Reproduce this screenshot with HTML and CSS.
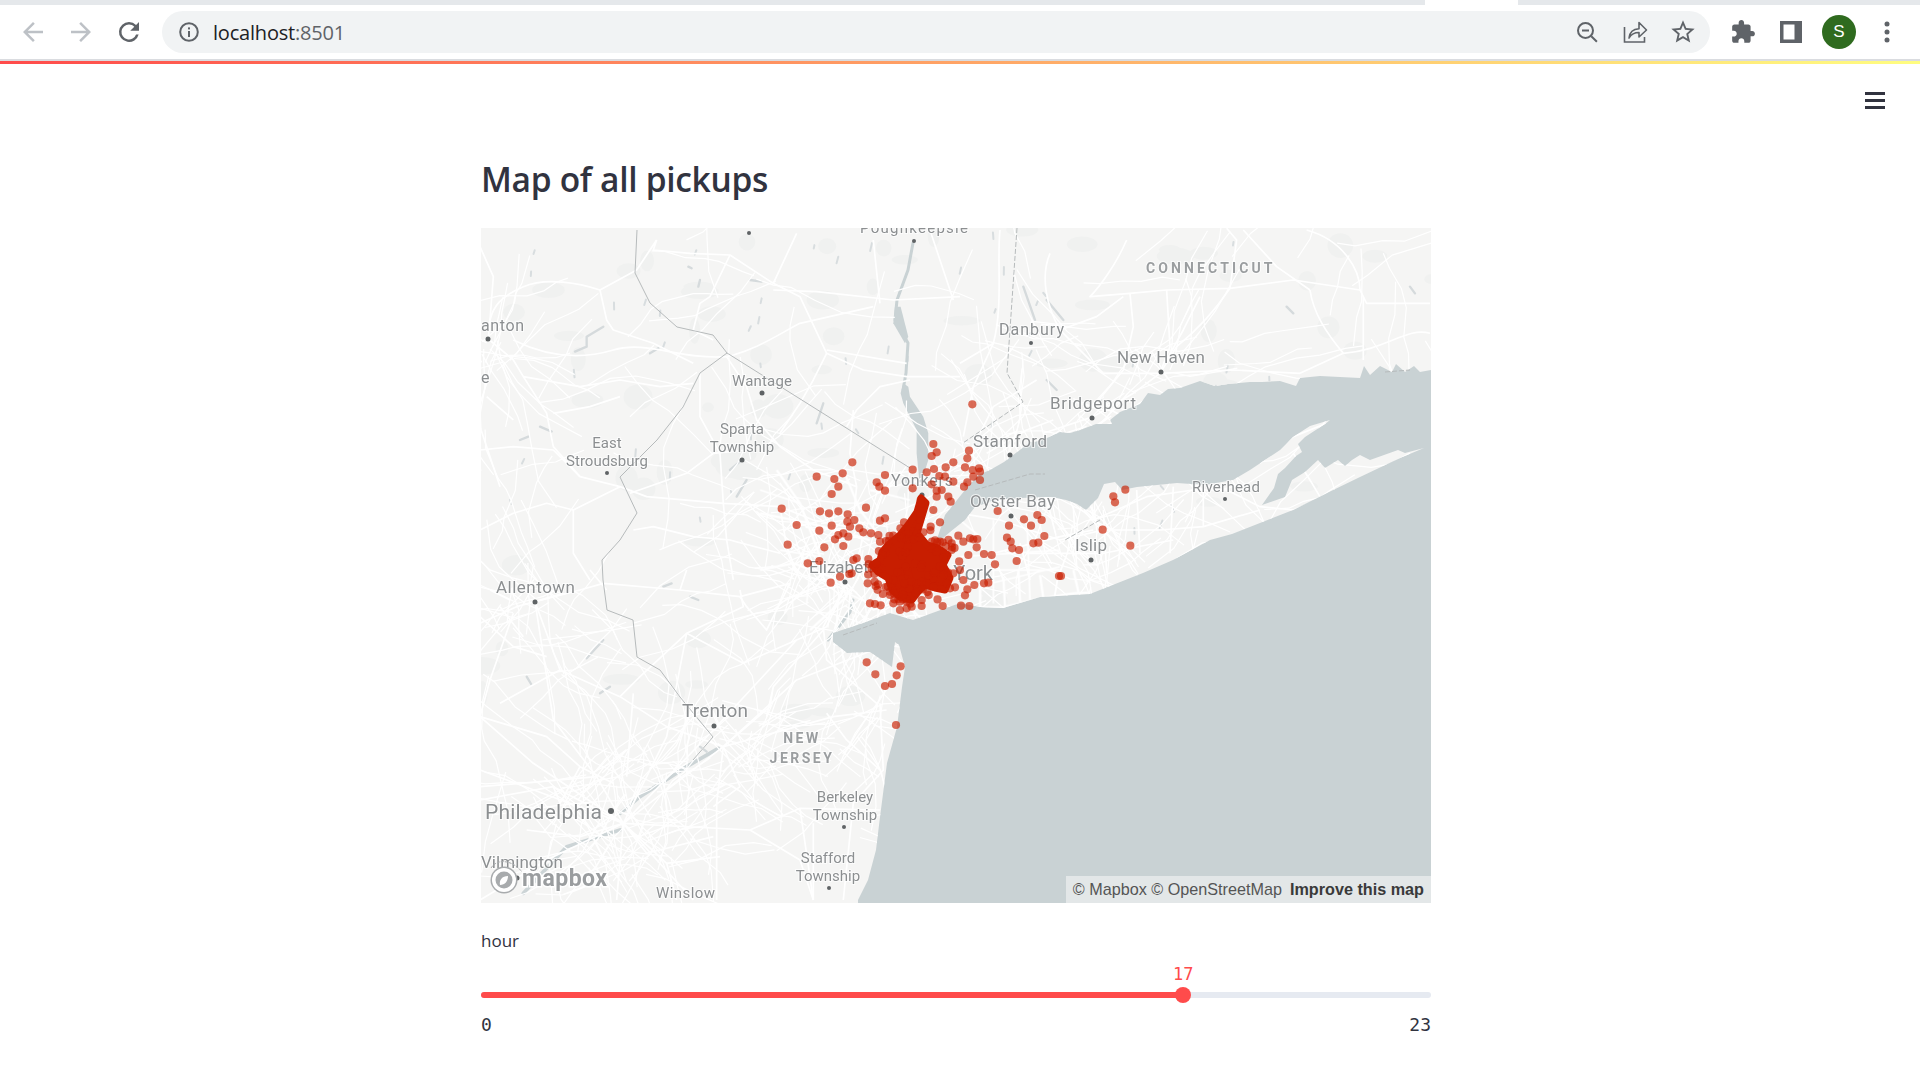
FILE: index.html
```html
<!DOCTYPE html>
<html lang="en">
<head>
    <meta charset="UTF-8">
    <title>Map of all pickups</title>
    <link rel="stylesheet" href="styles.css">
</head>
<body>

    <div class="tabstrip"><div class="tab"></div></div>

    <div class="toolbar">
        <button class="tool"><svg width="30" height="30" viewBox="0 0 24 24" class="off"><path d="M20 11H7.830l5.590-5.590L12 4l-8 8 8 8 1.410-1.410L7.830 13H20v-2z"/></svg></button>
        <button class="tool"><svg width="30" height="30" viewBox="0 0 24 24" class="off"><path d="M4 11h12.170l-5.590-5.590L12 4l8 8-8 8-1.410-1.410L16.170 13H4v-2z"/></svg></button>
        <button class="tool"><svg width="30" height="30" viewBox="0 0 24 24"><path d="M17.650 6.350A7.960 7.960 0 0 0 12 4a8 8 0 1 0 7.730 10h-2.080A6 6 0 1 1 12 6c1.660 0 3.140.69 4.220 1.780L13 11h7V4l-2.350 2.350z"/></svg></button>

        <div class="omnibox">
            <svg width="24" height="24" viewBox="0 0 24 24" class="info"><circle cx="12" cy="12" r="8.800" fill="none" stroke="#5f6368" stroke-width="2"/><rect x="11" y="11" width="2" height="6"/><rect x="11" y="7.400" width="2" height="2"/></svg>
            <span class="url">localhost<span class="port">:8501</span></span>
            <div class="omni-icons">
                <button class="tool"><svg width="24" height="24" viewBox="0 0 24 24"><circle cx="10.500" cy="10.500" r="7.500" fill="none" stroke="#5f6368" stroke-width="2"/><path d="M7 9.600h7v1.800H7zM15.600 16.900l1.400-1.400 5.600 5.600-1.400 1.400z"/></svg></button>
                <button class="tool"><svg width="26" height="26" viewBox="0 0 26 26"><path d="M2.500 8v15h20v-5" fill="none" stroke="#5f6368" stroke-width="1.600"/><path d="M7 19c.6-5.500 4-9 10-9.300V3.500l7.500 7.500-7.500 7v-4.500c-4 0-7.500 1.300-10 5.500z" fill="none" stroke="#5f6368" stroke-width="1.600" stroke-linejoin="round"/></svg></button>
                <button class="tool"><svg width="28" height="28" viewBox="0 0 24 24"><path d="M22 9.240l-7.190-.62L12 2 9.190 8.630 2 9.240l5.460 4.730L5.820 21 12 17.270 18.180 21l-1.630-7.030L22 9.240zM12 15.400l-3.760 2.270 1-4.280-3.320-2.880 4.380-.38L12 6.100l1.710 4.040 4.380.38-3.320 2.880 1 4.280L12 15.400z"/></svg></button>
            </div>
        </div>

        <button class="tool"><svg width="26" height="26" viewBox="0 0 24 24"><path d="M20.500 11H19V7c0-1.100-.9-2-2-2h-4V3.500C13 2.120 11.880 1 10.500 1S8 2.120 8 3.500V5H4c-1.100 0-1.990.9-1.990 2v3.800H3.500c1.490 0 2.700 1.210 2.700 2.700s-1.210 2.700-2.700 2.700H2V20c0 1.100.9 2 2 2h3.800v-1.500c0-1.490 1.210-2.700 2.700-2.700 1.490 0 2.700 1.210 2.700 2.700V22H17c1.100 0 2-.9 2-2v-4h1.500c1.380 0 2.500-1.120 2.500-2.500S21.880 11 20.500 11z"/></svg></button>
        <button class="tool"><svg width="22" height="22" viewBox="0 0 22 22"><path d="M0 0h22v22H0z"/><path d="M3.500 3.500h11v15h-11z" fill="#fff"/></svg></button>
        <button class="tool"><span class="avatar">S</span></button>
        <button class="tool"><svg width="8" height="24" viewBox="0 0 8 24"><circle cx="4" cy="4" r="2.500"/><circle cx="4" cy="12" r="2.500"/><circle cx="4" cy="20" r="2.500"/></svg></button>
    </div>

    <div class="decoration"></div>

    <div class="app">
        <button class="menu" aria-label="menu"><span></span><span></span><span></span></button>

        <div class="block">
            <h2 class="title">Map of all pickups</h2>

            <div class="map">
                <svg id="mapSvg" class="map-svg" width="950" height="675" viewBox="481 228 950 675">
                    <defs>
                        <clipPath id="landClip"><use href="#landShape"/></clipPath>
                    </defs>

                    <rect class="water" x="481" y="228" width="950" height="675"/>

                    <path id="landShape" class="land" d="M481 228H1431V370L1420 372 1414 366 1405 372 1396 364 1392 372 1380 366 1370 375 1364 366 1360 378 1340 377 1320 376 1300 378 1296 386 1280 381 1262 382 1250 382 1228 384 1215 386 1200 381 1180 388 1168 389 1160 395 1148 393 1140 404 1120 412 1110 420 1112 424 1096 424 1080 430 1070 433 1060 432 1040 441 1030 442 1012 456 1004 462 990 470 978 475 965 490 945 515 935 545 950 532 965 520 975 507 995 500 1020 498 1050 497 1066 500 1077 504 1086 510 1098 498 1104 484 1115 482 1122 490 1137 487 1177 483 1205 485 1233 480 1250 470 1262 462 1280 450 1293 437 1310 426 1330 420 1325 424 1305 437 1298 444 1302 452 1296 456 1285 468 1278 474 1274 488 1262 505 1285 497 1292 480 1305 472 1318 460 1325 468 1338 460 1345 466 1352 460 1360 455 1370 460 1398 450 1405 453 1424 448 1400 458 1360 477 1327 493 1293 510 1260 523 1232 534 1210 540 1173 560 1143 573 1100 590 1090 594 1040 597 1003 608 980 607 960 603 913 620 890 613 863 623 833 633 833 642 847 653 870 652 892 667 895 642 899 645 905 667 902 687 897 727 887 763 880 817 876 850 868 880 858 900V903H481z"/>

                    <g id="texture" clip-path="url(#landClip)"></g>

                    <g class="lakes">
                        <path class="hudson-thin" d="M913 243L908 270 897 300 895 320 908 343 906 373 903 390"/>
                        <g transform="translate(480 220) scale(.3333)">
                            <path class="hudson-fill" d="M1245 260L1262 260 1285 350 1275 370 1240 310z"/>
                            <path class="hudson-fill" d="M1270 490L1285 500 1290 530 1330 590 1345 640V720L1320 800 1310 700V630L1270 550 1262 520z"/>
                            <path d="M370 320L320 350 320 380 285 395"/>
                            <path d="M1010 610L1030 550"/>
                            <path d="M770 830L800 780M750 750L780 725M510 400L535 385M180 620L215 635M120 660L145 650M625 140L635 145M655 200L660 180M810 180L845 185"/>
                        </g>
                        <g transform="translate(960 220) scale(.3333)">
                            <path d="M190 200L225 300M260 240L310 300M260 480L290 510M980 260L1000 280M1350 200L1365 220"/>
                        </g>
                        <g transform="translate(480 570) scale(.3333)">
                            <path class="river" d="M130 970L260 830 420 780M420 730L480 680 620 590 715 535"/>
                            <path d="M630 80L655 90M660 530L680 545M360 370L390 350M320 265L370 210M550 50L575 40M140 320L155 345"/>
                        </g>
                        <path class="hudson-thin" d="M828 640L840 625 850 612 853 600"/>
                    </g>

                    <g id="minorRoads" clip-path="url(#landClip)"></g>

                    <g class="roads" clip-path="url(#landClip)">
                        <g transform="translate(480 220) scale(.3333)">
                            <path d="M0 80L40 170 30 300 25 357 100 420 130 470 200 580 220 680 300 770"/>
                            <path d="M100 360C200 410 300 420 400 390S600 420 740 410"/>
                            <path d="M360 210C300 190 200 170 130 200S40 260 30 300"/>
                            <path d="M360 210L380 300 400 330 520 370 640 430"/>
                            <path d="M530 60L520 90 630 100 750 105 880 190 960 230 1040 400 1150 450 1280 470 1440 470"/>
                            <path d="M750 105L690 230 660 250 640 330 700 360"/>
                            <path d="M880 210L1010 215 1240 240 1440 230"/>
                            <path d="M740 410C830 390 900 340 960 310L1180 260"/>
                            <path d="M1040 400L1000 480 960 550 900 640"/>
                            <path d="M660 460V590L720 700 730 850"/>
                            <path d="M740 410L800 500 830 600 900 680 1000 750 1130 800"/>
                            <path d="M0 690L100 680 220 690 300 770 420 800 500 830 730 850 900 860 1000 900 1200 940"/>
                            <path d="M450 820L620 760 700 700 800 690"/>
                            <path d="M420 800L280 870V1000L330 1080"/>
                            <path d="M0 930L100 880 200 850 280 870"/>
                            <path d="M730 850L740 960 760 1080"/>
                            <path d="M900 860L920 980 960 1080"/>
                            <path d="M460 930L520 920 640 950 750 960 900 1000"/>
                            <path d="M220 580L330 560 420 530"/>
                            <path d="M130 470L300 500 420 480 540 500 640 490"/>
                            <path d="M1120 570L1110 700 1130 800 1120 900"/>
                            <path d="M1290 480L1200 500 1130 570 1100 620"/>
                            <path d="M1040 390L1280 430M1180 60L1200 250M1350 30L1420 240M950 40L880 190M360 210L470 150 530 60M20 530L100 600M0 620L60 800"/>
                        </g>
                        <g transform="translate(960 220) scale(.3333)">
                            <path d="M120 30C110 120 130 260 100 370L40 500 10 650"/>
                            <path d="M270 100C240 170 260 260 300 330L430 460H600L820 450 1020 460"/>
                            <path d="M500 60C470 130 420 200 390 230L510 220 620 210 810 205 1000 180 1200 210 1220 250H1410"/>
                            <path d="M810 205C760 280 700 340 650 380L600 460"/>
                            <path d="M510 220L520 320 490 450 400 560"/>
                            <path d="M620 210L630 380 600 460"/>
                            <path d="M720 230L670 330 620 420"/>
                            <path d="M810 205L830 60 800 25"/>
                            <path d="M1050 210C1060 280 1100 340 1150 400"/>
                            <path d="M1210 230V420"/>
                            <path d="M1040 30C1150 60 1200 150 1200 210"/>
                            <path d="M1410 340C1340 320 1280 390 1150 400L1020 460"/>
                            <path d="M850 30L950 140 1050 210"/>
                            <path d="M300 330L410 290 490 230"/>
                            <path d="M100 370L0 430M230 480L100 560 60 640M250 640L400 590 520 520 600 460M80 700L200 630 280 600"/>
                            <path d="M400 900L560 830 700 810H800L900 860 1000 870 1150 810 1350 700"/>
                            <path d="M300 960L430 930H600L730 920 900 870"/>
                            <path d="M60 1010L300 950 400 930M900 730L1000 650 1100 610M1000 700L1050 780 1080 830"/>
                            <path d="M200 1000H430L640 960M340 860L350 1040M430 870L440 1060M530 810L540 1000M640 800L630 1000M730 810V920"/>
                            <path d="M0 880L120 900 300 960M100 1000L130 1080M180 970L210 1080"/>
                        </g>
                        <g transform="translate(960 570) scale(.3333)">
                            <path class="main" d="M0 112L130 112 240 85 340 70 385 68M130 20L135 110M175 0L180 95M340 0L355 65M60 40L60 110M240 15L250 85"/>
                        </g>
                        <g transform="translate(480 570) scale(.3333)">
                            <path d="M0 160L110 110 165 95 300 60 370 40 600 60 780 80 930 40"/>
                            <path d="M430 760L700 480 950 210 1040 170 1100 40"/>
                            <path d="M430 760L730 530"/>
                            <path d="M430 760L640 990M430 760L560 880 590 990M430 760L410 990M430 760L200 870 0 990"/>
                            <path d="M430 760L810 780 960 715 1200 720"/>
                            <path d="M430 760L160 580 0 440M430 760L350 620 220 450 165 95M430 760L0 600"/>
                            <path d="M430 760L560 500 620 190 790 110 780 60"/>
                            <path d="M730 530L710 700V990M730 530L780 650 700 710M730 530L950 330 1180 240M730 530L1060 440 1220 420"/>
                            <path d="M880 350L860 440M1030 180L880 350 870 410 730 530"/>
                            <path d="M1200 400L1210 600 1120 700 1090 990M960 715L1000 990M810 780L960 870 1000 990"/>
                            <path d="M1040 430L1100 510 1200 600M1000 990V760M0 690L220 650 430 760M100 130L30 330 0 440"/>
                            <path d="M165 95L240 300 420 380 560 470 730 530M0 440L200 500 300 590 400 640M460 370L440 620M350 620L120 640 0 650M620 190L480 320 420 380"/>
                            <path d="M1100 40L1030 170 1040 270 1190 400M0 140L100 230 200 260M240 300L60 400M620 190L790 280 950 210M300 590L240 700 220 650M430 760L300 800 140 780M560 880L720 860M430 760L500 850 700 800"/>
                            <path d="M60 110L130 200M90 90L30 60M165 95L250 70M330 0L380 60M600 60L620 0M780 80L800 110 860 180 930 40M1100 40L1180 120 1240 100"/>
                        </g>
                        <g transform="translate(760 470) scale(.3333)">
                            <path class="main" d="M0 300L100 280 240 330 260 380 150 480M0 130L150 160 330 210M50 0L120 100 180 260M250 0L300 120 360 200"/>
                            <path d="M330 60L450 90M540 300L900 300M650 350L900 290M700 150V400M800 130L810 390M900 240L600 260M120 100L0 60M150 300L140 400M180 260L60 240M330 400L240 360M600 150L660 200"/>
                        </g>
                    </g>

                    <g class="borders">
                        <path d="M727 353L910 468"/>
                        <path class="dash" d="M1017 228L1007 373 1023 402 963 443"/>
                        <path class="dash" d="M975 490L1030 474 1045 474M1100 520L1065 540M843 635L877 623M1385 372L1410 370"/>
                        <path d="M637 230L635 273 650 303 677 327 713 335 727 353 700 373 683 407 657 440 620 477 637 513 620 540 602 560 603 580 607 610 633 620 637 657 660 670 680 697 713 737 693 760"/>
                    </g>

                    <g class="labels">
                        <text x="860" y="233" textLength="108">Poughkeepsie</text>
                        <text x="481" y="331" textLength="43" class="l16">anton</text>
                        <text x="481" y="383" class="l16">e</text>
                        <text x="732" y="386" textLength="60">Wantage</text>
                        <text x="742" y="434" text-anchor="middle">Sparta</text>
                        <text x="742" y="452" text-anchor="middle">Township</text>
                        <text x="607" y="448" text-anchor="middle">East</text>
                        <text x="607" y="466" text-anchor="middle">Stroudsburg</text>
                        <text x="891" y="486" textLength="62" class="l16">Yonkers</text>
                        <text x="809" y="573" class="l17">Elizabeth</text>
                        <text x="993" y="580" text-anchor="end" class="l20">New York</text>
                        <text x="970" y="507" textLength="85" class="l17">Oyster Bay</text>
                        <text x="999" y="335" textLength="65" class="l16">Danbury</text>
                        <text x="1117" y="363" textLength="88" class="l17">New Haven</text>
                        <text x="1050" y="409" textLength="86" class="l17">Bridgeport</text>
                        <text x="973" y="447" textLength="74" class="l17">Stamford</text>
                        <text x="1192" y="492" textLength="68">Riverhead</text>
                        <text x="1075" y="551" textLength="32" class="l17">Islip</text>
                        <text x="496" y="593" textLength="79" class="l17">Allentown</text>
                        <text x="682" y="717" textLength="66" class="l19">Trenton</text>
                        <text x="485" y="819" textLength="117" class="l21">Philadelphia</text>
                        <text x="481" y="868" textLength="82" class="l17">Vilmington</text>
                        <text x="656" y="898" textLength="59">Winslow</text>
                        <text x="845" y="802" text-anchor="middle">Berkeley</text>
                        <text x="845" y="820" text-anchor="middle">Township</text>
                        <text x="828" y="863" text-anchor="middle">Stafford</text>
                        <text x="828" y="881" text-anchor="middle">Township</text>
                        <text x="1146" y="273" textLength="129" class="state">CONNECTICUT</text>
                        <text x="802" y="743" text-anchor="middle" class="state">NEW</text>
                        <text x="802" y="763" text-anchor="middle" class="state">JERSEY</text>
                    </g>

                    <g class="towns">
                        <circle cx="488" cy="339" r="2.500"/><circle cx="762" cy="393" r="2.500"/><circle cx="742" cy="460" r="2.500"/>
                        <circle cx="607" cy="473" r="2"/><circle cx="914" cy="241" r="2"/><circle cx="749" cy="233" r="2"/>
                        <circle cx="922" cy="495" r="2.500"/><circle cx="1031" cy="343" r="2"/><circle cx="1161" cy="372" r="2.500"/>
                        <circle cx="1092" cy="418" r="2.500"/><circle cx="1010" cy="455" r="2.500"/><circle cx="1011" cy="516" r="2.500"/>
                        <circle cx="1225" cy="499" r="2"/><circle cx="1091" cy="560" r="2.500"/><circle cx="535" cy="602" r="2.500"/>
                        <circle cx="845" cy="582" r="2.500"/><circle cx="714" cy="726" r="2.500"/><circle cx="611" cy="811" r="3"/>
                        <circle cx="844" cy="827" r="2"/><circle cx="829" cy="888" r="2"/><circle cx="517" cy="878" r="2.500"/>
                    </g>

                    <g id="pickups"></g>

                    <g class="logo">
                        <path class="logo-ring" d="M491 868C497 858 513 860 522 872"/>
                        <circle class="logo-edge" cx="504" cy="880" r="13.500"/>
                        <circle class="logo-white" cx="504" cy="880" r="12"/>
                        <circle class="logo-edge" cx="504" cy="880" r="8.500"/>
                        <path d="M500 885c-1-5 2-9 8-9 0 5-3 9-8 9z"/>
                        <text x="522" y="886" textLength="85">mapbox</text>
                    </g>
                </svg>

                <div class="attrib">© Mapbox © OpenStreetMap<b>Improve this map</b></div>
            </div>

            <label class="hour-label">hour</label>

            <div class="slider">
                <div class="slider-fill" style="width: 73.91%">
                    <span class="slider-thumb"></span>
                    <span class="slider-value">17</span>
                </div>
            </div>

            <div class="slider-ends">
                <span>0</span>
                <span>23</span>
            </div>
        </div>
    </div>

    <script src="map.js"></script>
</body>
</html>
```

FILE: styles.css
```css
html, body {
    margin: 0;
    height: 100%;
    overflow: hidden;
    background-color: #fff;
}

body {
    display: flex;
    flex-direction: column;
    font-family: 'Open Sans', sans-serif;
    color: #31333f;
}

button {
    border: none;
    padding: 0;
    background: none;
}

.tabstrip {
    height: 5px;
    background-color: #e5e8eb;
}

.tab {
    width: 93px;
    height: 5px;
    margin-left: 1425px;
    background-color: #fff;
}

.toolbar {
    display: flex;
    align-items: center;
    height: 56px;
    padding: 0 9px;
    border-bottom: 2px solid #dadce0;
    box-sizing: border-box;
    background-color: #fff;
}

.tool {
    display: flex;
    justify-content: center;
    align-items: center;
    width: 48px;
    height: 42px;
    flex-shrink: 0;
}

.tool svg {
    fill: #5f6368;
}

.tool svg.off {
    fill: #bdc1c6;
}

.omnibox {
    display: flex;
    align-items: center;
    flex: 1;
    height: 42px;
    margin: 0 9px;
    padding: 0 3px 0 15px;
    border-radius: 21px;
    background-color: #f1f3f4;
}

.info {
    fill: #5f6368;
    flex-shrink: 0;
}

.url {
    margin-left: 12px;
    font-family: 'Open Sans', sans-serif;
    font-size: 20px;
    letter-spacing: -0.2px;
    color: #202124;
}

.port {
    color: #5f6368;
}

.omni-icons {
    display: flex;
    margin-left: auto;
}

.avatar {
    display: flex;
    justify-content: center;
    align-items: center;
    width: 34px;
    height: 34px;
    border-radius: 50%;
    background-color: #2f6b1f;
    color: #fff;
    font-size: 17px;
}

.decoration {
    height: 3px;
    background: linear-gradient(90deg, #ff4b4b, #fffd80);
}

.app {
    flex: 1;
    position: relative;
    display: flex;
    justify-content: center;
    padding-right: 8px;
}

.menu {
    position: absolute;
    top: 28px;
    right: 35px;
    display: flex;
    flex-direction: column;
    gap: 4.5px;
    width: 20px;
}

.menu span {
    height: 2.5px;
    background-color: #31333f;
}

.block {
    width: 950px;
}

.title {
    margin: 0;
    height: 164px;
    box-sizing: border-box;
    padding-top: 93px;
    font-size: 33.5px;
    font-weight: 600;
    line-height: 44px;
    letter-spacing: -0.3px;
}

.map {
    position: relative;
    height: 675px;
    overflow: hidden;
}

.map-svg {
    display: block;
}

.water {
    fill: #c9d2d4;
}

.land {
    fill: #f5f5f4;
}

#texture ellipse {
    fill: #f0f1f0;
}

#texture path {
    fill: none;
    stroke: #d8dddf;
    stroke-width: 2;
    stroke-linecap: round;
}

.lakes path {
    fill: none;
    stroke: #d5dadc;
    stroke-width: 7;
    stroke-linecap: round;
    stroke-linejoin: round;
}

.lakes path.hudson-thin {
    stroke: #c9d2d4;
    stroke-width: 3;
}

.lakes path.hudson-fill {
    fill: #c9d2d4;
    stroke: none;
}

.lakes path.river {
    stroke: #ccd4d6;
    stroke-width: 11;
}

#minorRoads {
    filter: blur(0.3px);
}

#minorRoads path {
    fill: none;
    stroke: #fff;
    stroke-width: 1.2;
    stroke-linejoin: round;
}

.roads {
    filter: blur(0.4px);
}

.roads path {
    fill: none;
    stroke: #fff;
    stroke-width: 5;
    stroke-linejoin: round;
}

.roads path.main {
    stroke-width: 7;
}

.borders path {
    fill: none;
    stroke: #b6babb;
    stroke-width: 1;
}

.borders path.dash {
    stroke-dasharray: 5 2;
}

.labels text {
    font-family: 'Roboto', sans-serif;
    font-size: 15px;
    fill: #8c8f91;
    stroke: rgba(255, 255, 255, 0.7);
    stroke-width: 2px;
    paint-order: stroke;
}

.labels text.l16 {
    font-size: 16px;
}

.labels text.l17 {
    font-size: 17px;
}

.labels text.l19 {
    font-size: 19px;
}

.labels text.l20 {
    font-size: 20px;
}

.labels text.l21 {
    font-size: 21px;
}

.labels text.state {
    font-size: 14px;
    font-weight: 700;
    letter-spacing: 2.5px;
    fill: #9b9ea0;
}

.towns circle {
    fill: #5f6365;
}

#pickups circle {
    fill: #c81e00;
    fill-opacity: 0.66;
}

#pickups path {
    fill: #c81e00;
    stroke: #c81e00;
    stroke-width: 7;
    stroke-linejoin: round;
}

.logo .logo-edge {
    fill: #a8abad;
}

.logo .logo-white {
    fill: #fff;
}

.logo path {
    fill: #fff;
}

.logo path.logo-ring {
    fill: none;
    stroke: #a8abad;
    stroke-width: 1;
    stroke-dasharray: 3 1;
}

.logo text {
    font-family: 'Roboto', sans-serif;
    font-size: 23px;
    font-weight: 700;
    fill: #9a9d9f;
    stroke: #fff;
    stroke-width: 3px;
    paint-order: stroke;
}

.attrib {
    position: absolute;
    right: 0;
    bottom: 0;
    display: flex;
    align-items: center;
    gap: 8px;
    height: 27px;
    padding: 0 7px;
    background-color: #e3e7e8;
    font-family: 'Liberation Sans', sans-serif;
    font-size: 16.2px;
    color: #555;
}

.attrib b {
    color: #3a3a3a;
}

.hour-label {
    display: block;
    margin-top: 26px;
    font-size: 17px;
    line-height: 24px;
    color: #31333f;
}

.slider {
    height: 6px;
    margin-top: 38.5px;
    border-radius: 3px;
    background-color: #e6eaf1;
}

.slider-fill {
    position: relative;
    height: 6px;
    border-radius: 3px;
    background-color: #ff4b4b;
}

.slider-thumb {
    position: absolute;
    top: -5px;
    right: -8px;
    width: 16px;
    height: 16px;
    border-radius: 50%;
    background-color: #ff4b4b;
}

.slider-value {
    position: absolute;
    top: -29px;
    right: -12px;
    width: 24px;
    text-align: center;
    font-family: 'DejaVu Sans Mono', monospace;
    font-size: 17px;
    line-height: 22px;
    color: #ff4b4b;
}

.slider-ends {
    display: flex;
    justify-content: space-between;
    margin-top: 16.5px;
    font-family: 'DejaVu Sans Mono', monospace;
    font-size: 18px;
    line-height: 22px;
}
```

FILE: map.js
```js
const svgNS = 'http://www.w3.org/2000/svg';

let seed = 4711;
function rnd() {
    seed = (seed * 16807) % 2147483647;
    return seed / 2147483647;
}

function add(parent, tag, attrs) {
    const el = document.createElementNS(svgNS, tag);
    for (const key in attrs) {
        el.setAttribute(key, attrs[key]);
    }
    parent.appendChild(el);
    return el;
}

// land texture: faint patches and small ponds
const texture = document.getElementById('texture');
for (let i = 0; i < 110; i++) {
    add(texture, 'ellipse', {
        cx: 481 + rnd() * 950, cy: 228 + rnd() * 500,
        rx: 5 + rnd() * 14, ry: 4 + rnd() * 9
    });
}
for (let i = 0; i < 55; i++) {
    const x = 481 + rnd() * 800;
    const y = 228 + rnd() * 300;
    add(texture, 'path', { d: `M${x} ${y}l${rnd() * 6 - 3} ${3 + rnd() * 5}` });
}

// minor roads tangle around the towns, the rest wander over the land
const hubs = [
    [625, 815, 70, 90], [725, 745, 50, 40], [535, 605, 45, 34], [850, 560, 60, 60],
    [490, 345, 30, 16], [1000, 450, 40, 26], [1090, 420, 35, 16], [1160, 375, 35, 16],
    [1030, 345, 25, 10], [1100, 540, 70, 44], [1220, 510, 50, 14], [850, 610, 40, 26],
    [860, 720, 40, 20], [760, 470, 50, 12]
];
const roads = document.getElementById('minorRoads');

function wander(x, y, angle, steps) {
    let d = `M${x.toFixed(1)} ${y.toFixed(1)}`;
    for (let s = 0; s < steps; s++) {
        angle += (rnd() - 0.5) * 0.8;
        const len = 12 + rnd() * 22;
        x += Math.cos(angle) * len;
        y += Math.sin(angle) * len;
        d += `L${x.toFixed(1)} ${y.toFixed(1)}`;
    }
    add(roads, 'path', { d: d });
}

hubs.forEach(function(h) {
    for (let i = 0; i < h[3]; i++) {
        const a = rnd() * Math.PI * 2;
        const r = Math.sqrt(rnd()) * h[2];
        wander(h[0] + Math.cos(a) * r, h[1] + Math.sin(a) * r, rnd() * Math.PI * 2, 3 + Math.floor(rnd() * 3));
    }
});
for (let i = 0; i < 170; i++) {
    wander(481 + rnd() * 950, 228 + rnd() * 675, rnd() * Math.PI * 2, 4 + Math.floor(rnd() * 4));
}

// pickup points, read off in crops of the map at 3x
const groups = [
    { x: 760, y: 470, pts: [[170,20],[223,27],[235,50],[248,10],[215,72],[65,116],[180,124],[207,130],[235,124],[318,113],[263,133],[283,150],[262,155],[270,170],[360,152],[375,145],[110,165],[178,182],[215,167],[298,175],[250,190],[235,195],[265,200],[225,208],[310,187],[333,190],[355,195],[378,213],[360,215],[83,224],[193,232],[250,228],[325,267],[290,265],[280,270],[178,273],[143,280],[275,310],[268,312],[240,320],[212,338],[323,340],[330,400],[345,402],[362,406],[403,388],[390,365],[420,420],[440,395],[455,410],[485,390],[485,408],[548,408],[603,407],[628,408],[615,376],[622,358],[643,345],[672,340],[685,338],[705,283],[625,255],[650,232],[672,252],[695,255],[640,208],[630,205],[652,207],[610,215],[575,220],[575,240],[595,197],[540,215],[512,170],[540,157],[520,120],[490,187],[432,157],[350,37],[358,50],[375,62],[375,15],[458,55],[515,43],[530,62],[530,80],[545,60],[565,80],[572,95],[580,35],[612,50],[622,37],[660,30],[640,20],[660,5],[713,123],[792,148],[747,167],[813,167],[832,135],[845,150],[853,198],[741,203],[752,215],[757,235],[777,240],[820,220],[835,218],[770,273],[897,318],[600,300],[580,310],[610,330],[560,340],[570,355],[530,350],[500,340],[520,325],[470,340],[285,262],[295,268],[278,305],[450,380],[400,400],[390,375],[440,415],[550,300],[540,290],[570,350],[585,352],[480,150],[480,130],[485,100],[482,90]] },
    { x: 480, y: 220, pts: [[1360,672],[1370,697],[1355,708],[1420,727],[1397,742],[1362,747],[1340,757],[1298,749],[1215,764],[1190,786],[1198,798],[1215,813],[1298,803],[1117,727],[1357,795],[1370,808],[1368,825],[1405,830],[1412,843],[1378,768],[1395,770],[1420,785]] },
    { x: 960, y: 220, pts: [[37,553],[27,692],[22,715],[15,742],[57,745],[38,750],[45,770],[62,780],[20,788],[12,797],[113,874],[193,898],[233,881],[245,901],[213,917],[147,917],[254,948],[141,954],[150,966],[157,987],[177,990],[220,970],[233,968],[170,1024],[106,1034],[71,1000],[93,1003],[45,980],[30,957],[52,957],[428,929],[511,977],[460,829],[465,847],[496,809],[303,1068]] },
    { x: 480, y: 570, pts: [[1052,38],[1163,40],[1170,100],[1188,102],[1202,106],[1160,277],[1186,313],[1262,289],[1250,316],[1236,342],[1215,348],[1248,465],[1388,108],[1325,90],[1325,108],[1265,122],[1300,115]] }
];

const layer = document.getElementById('pickups');

// the dense part over the city is a solid mass of points
add(layer, 'path', { d: 'M921 498L917 512 908 525 900 535 888 545 882 552 880 560 872 565 878 572 888 578 892 590 900 597 912 600 918 592 925 585 935 588 945 590 950 578 943 565 948 555 938 548 927 545 917 533 923 513 926 503z' });

const seen = [];
function dot(x, y) {
    // the crops overlap, so skip a point that was already placed
    if (seen.some(function(p) { return Math.abs(p[0] - x) < 2 && Math.abs(p[1] - y) < 2; })) {
        return;
    }
    seen.push([x, y]);
    add(layer, 'circle', { cx: x, cy: y, r: 4.1 });
}

groups.forEach(function(group) {
    group.pts.forEach(function(p) {
        dot(group.x + p[0] / 3, group.y + p[1] / 3);
    });
});

for (let i = 0; i < 110; i++) {
    const a = rnd() * Math.PI * 2;
    const r = Math.sqrt(rnd());
    dot(912 + Math.cos(a) * r * 48, 565 + Math.sin(a) * r * 42);
}
```
